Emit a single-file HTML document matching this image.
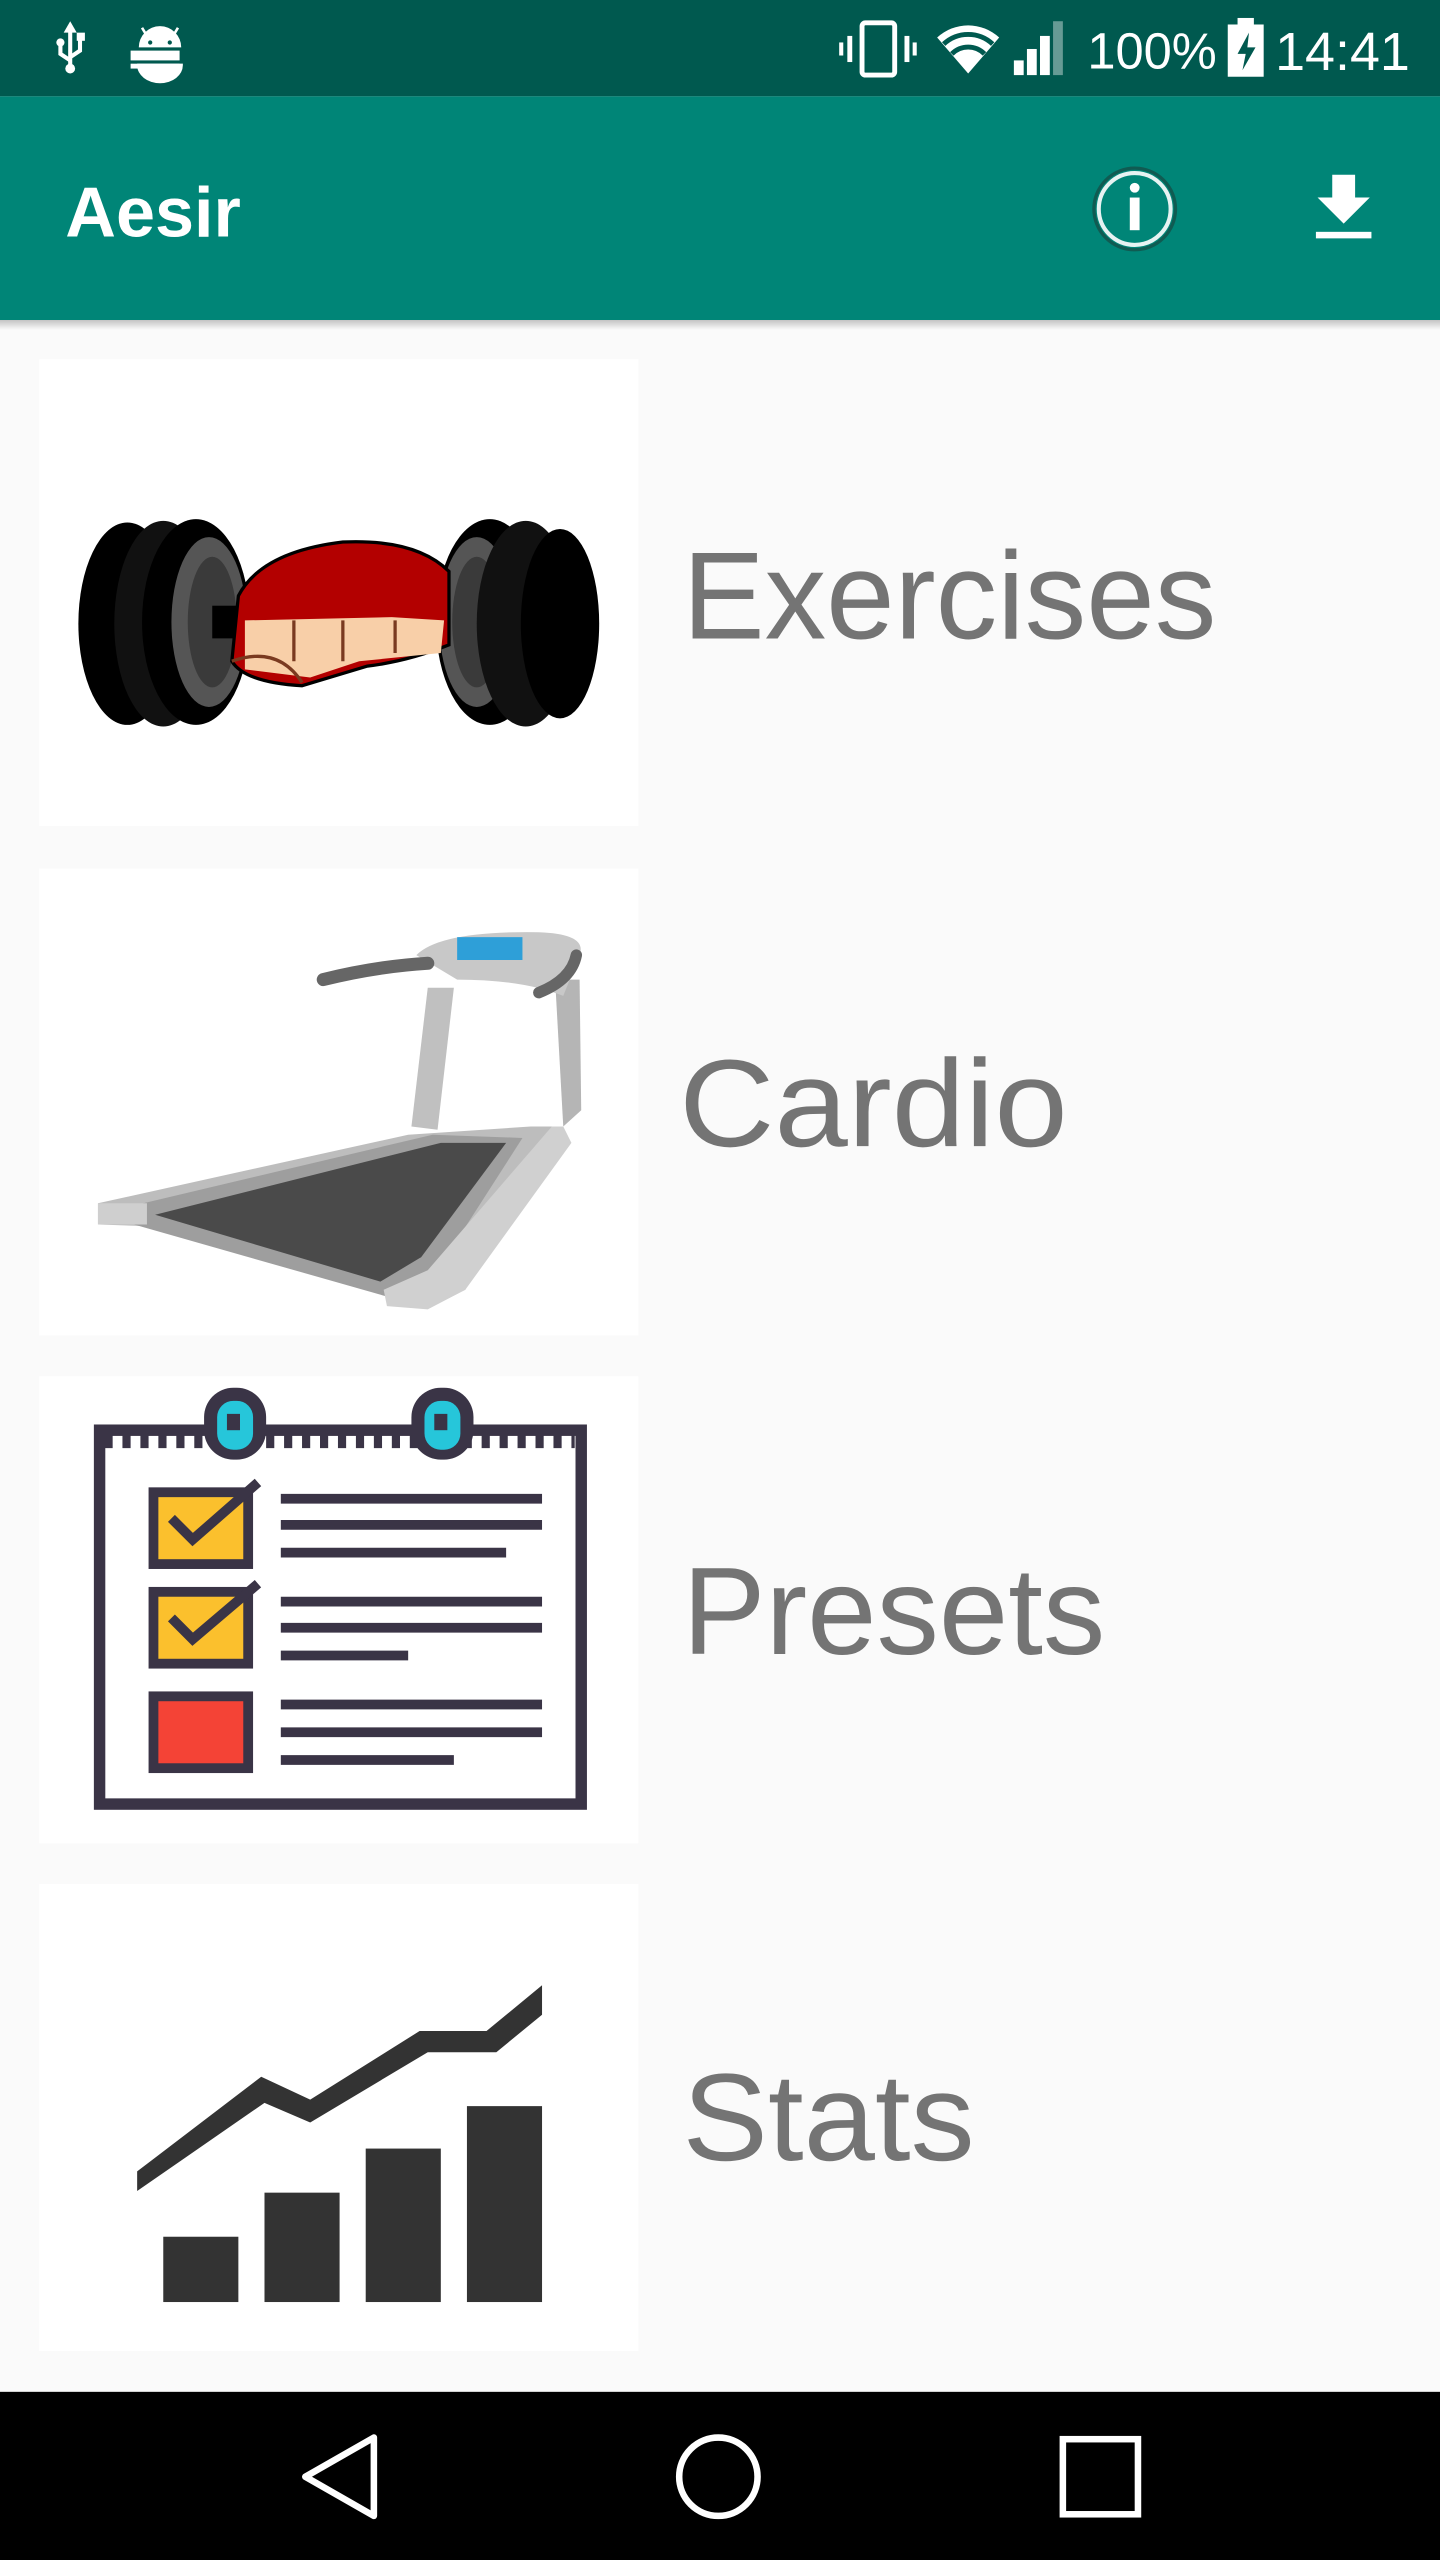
<!DOCTYPE html>
<html><head><meta charset="utf-8"><style>
html,body{margin:0;padding:0;width:1440px;height:2560px;overflow:hidden;background:#fafafa}
svg{display:block}
</style></head><body>
<svg width="1440" height="2560" viewBox="0 0 882 1568" preserveAspectRatio="none" xmlns="http://www.w3.org/2000/svg">
<defs>
<linearGradient id="sh" x1="0" y1="0" x2="0" y2="1"><stop offset="0" stop-color="#000" stop-opacity="0.22"/><stop offset="1" stop-color="#000" stop-opacity="0"/></linearGradient>
</defs>
<rect x="0" y="0" width="882" height="1568" fill="#fafafa"/>
<rect x="0" y="0" width="882" height="59" fill="#00594f"/>
<rect x="0" y="59" width="882" height="137" fill="#008577"/>
<rect x="0" y="196" width="882" height="6" fill="url(#sh)"/>
<!-- usb -->
<g fill="#fff" stroke="#fff">
<path d="M43 16 L43 42" stroke-width="2.5"/>
<path d="M39 20 L43 13 L47 20Z" stroke="none"/>
<path d="M37 26 L37 33 L43 37 M49 24 L49 31 L43 35" fill="none" stroke-width="2.5"/>
<circle cx="37" cy="26" r="2.5" stroke="none"/><rect x="47" y="20" width="5" height="5" stroke="none"/>
<circle cx="43" cy="42" r="3" stroke="none"/>
</g>
<!-- android -->
<g fill="#fff">
<path d="M85 29 A13 13 0 0 1 111 29Z"/>
<path d="M87 17 L90 22 M109 17 L106 22" stroke="#fff" stroke-width="1.6"/>
<rect x="80" y="31" width="30" height="6"/>
<path d="M84 39 H112 V40 A14 11 0 0 1 84 40Z"/>
<rect x="80" y="39" width="30" height="3"/>
</g>
<circle cx="92" cy="26" r="1.3" fill="#00594f"/><circle cx="104" cy="26" r="1.3" fill="#00594f"/>
<!-- vibrate -->
<rect x="528" y="14" width="20" height="32" rx="2" fill="none" stroke="#fff" stroke-width="3"/>
<rect x="519" y="22" width="3" height="16" fill="#fff"/><rect x="554" y="22" width="3" height="16" fill="#fff"/>
<rect x="514" y="26" width="2.5" height="8" fill="#fff"/><rect x="559" y="26" width="2.5" height="8" fill="#fff"/>
<!-- wifi -->
<path d="M574 23 A28 28 0 0 1 612 23 L593 45Z" fill="#fff"/>
<path d="M578 27 A22 22 0 0 1 608 27" fill="none" stroke="#00594f" stroke-width="3"/>
<path d="M583 33 A14 14 0 0 1 603 33" fill="none" stroke="#00594f" stroke-width="3"/>
<!-- signal bars -->
<rect x="621" y="37" width="6" height="9" fill="#fff"/>
<rect x="629" y="30" width="6" height="16" fill="#fff"/>
<rect x="637" y="22" width="6" height="24" fill="#fff"/>
<rect x="645" y="13" width="6" height="33" fill="#fff" opacity="0.4"/>
<text x="666" y="42" font-family="Liberation Sans, sans-serif" font-size="31" fill="#fff">100%</text>
<!-- battery -->
<rect x="752" y="15" width="22" height="32" fill="#fff"/><rect x="758" y="11" width="10" height="5" fill="#fff"/>
<path d="M765 20 L758 33 L763 33 L761 43 L769 29 L764 29Z" fill="#00594f"/>
<text x="781" y="43" font-family="Liberation Sans, sans-serif" font-size="33" fill="#fff">14:41</text>
<!-- title -->
<text x="40" y="145" font-family="Liberation Sans, sans-serif" font-weight="bold" font-size="43" fill="#fff">Aesir</text>
<!-- info -->
<circle cx="695" cy="128" r="25" fill="none" stroke="#1a3f3a" stroke-width="2" opacity="0.6"/>
<circle cx="695" cy="128" r="22" fill="none" stroke="#fff" stroke-width="2.5" opacity="0.9"/>
<circle cx="695" cy="115" r="3" fill="#fff"/><rect x="692" y="121" width="6" height="20" fill="#fff"/>
<!-- download -->
<path d="M816 107 H830 V121 H839 L823 137 L807 121 H816Z" fill="#fff"/>
<rect x="806" y="142" width="34" height="4" fill="#fff"/>

<rect x="24" y="220" width="367" height="286" fill="#fff"/>
<rect x="24" y="532" width="367" height="286" fill="#fff"/>
<rect x="24" y="843" width="367" height="286" fill="#fff"/>
<rect x="24" y="1154" width="367" height="286" fill="#fff"/>

<!-- dumbbell -->
<g>
<ellipse cx="78" cy="382" rx="30" ry="62" fill="#000"/>
<ellipse cx="100" cy="382" rx="30" ry="63" fill="#111"/>
<ellipse cx="120" cy="381" rx="33" ry="63" fill="#000"/>
<ellipse cx="128" cy="381" rx="23" ry="52" fill="#555"/>
<ellipse cx="130" cy="381" rx="15" ry="40" fill="#3a3a3a"/>
<rect x="130" y="371" width="160" height="20" fill="#000"/>
<ellipse cx="300" cy="381" rx="33" ry="63" fill="#000"/>
<ellipse cx="292" cy="381" rx="23" ry="52" fill="#555"/>
<ellipse cx="292" cy="381" rx="15" ry="40" fill="#3a3a3a"/>
<ellipse cx="322" cy="382" rx="30" ry="63" fill="#111"/>
<ellipse cx="343" cy="382" rx="24" ry="58" fill="#000"/>
<path d="M146 365 Q160 338 210 332 Q255 330 275 350 L275 395 Q250 405 225 408 L185 420 Q150 418 142 405Z" fill="#b30000" stroke="#000" stroke-width="2"/>
<path d="M150 380 L240 378 L272 380 L270 400 L220 405 L190 415 L150 410Z" fill="#f8cfa8"/>
<path d="M180 380 V405 M210 380 V405 M242 380 V400 M142 405 Q170 395 185 418" stroke="#7a3a20" stroke-width="2" fill="none"/>
</g>

<!-- treadmill -->
<g>
<path d="M60 737 L250 695 L325 690 L340 690 L285 790 L265 800 L240 790 L120 752 L60 750Z" fill="#bdbdbd"/>
<path d="M75 740 L265 695 L320 697 L270 775 L240 795 L75 748Z" fill="#9e9e9e"/>
<path d="M95 744 L270 700 L310 700 L258 770 L233 785Z" fill="#4a4a4a"/>
<path d="M235 790 L262 778 L338 690 L345 690 L350 700 L285 790 L262 802 L237 800Z" fill="#d0d0d0"/>
<path d="M60 737 L90 737 L90 750 L60 750Z" fill="#cfcfcf"/>
<path d="M252 690 L262 605 L278 605 L268 692Z" fill="#c0c0c0"/>
<path d="M340 600 L355 600 L356 680 L345 690Z" fill="#b5b5b5"/>
<path d="M255 585 Q270 570 330 571 Q360 572 355 585 L345 610 Q320 600 280 600Z" fill="#c8c8c8"/>
<rect x="280" y="574" width="40" height="14" fill="#2e9fd8"/>
<path d="M198 600 Q230 592 262 590" stroke="#666" stroke-width="8" fill="none" stroke-linecap="round"/>
<path d="M330 608 Q350 600 353 585" stroke="#666" stroke-width="7" fill="none" stroke-linecap="round"/>
</g>

<!-- presets -->
<g>
<rect x="61" y="876" width="295" height="229" fill="#fff" stroke="#3a3446" stroke-width="7"/>
<path d="M64 883 H352" stroke="#3a3446" stroke-width="8" stroke-dasharray="5 6"/>
<rect x="125" y="850" width="38" height="44" rx="18" fill="#3a3446"/>
<rect x="133" y="858" width="22" height="30" rx="10" fill="#26c6da"/>
<rect x="139" y="866" width="8" height="10" fill="#3a3446"/>
<rect x="252" y="850" width="38" height="44" rx="18" fill="#3a3446"/>
<rect x="260" y="858" width="22" height="30" rx="10" fill="#26c6da"/>
<rect x="266" y="866" width="8" height="10" fill="#3a3446"/>
<rect x="94" y="914" width="58" height="44" fill="#fbc02d" stroke="#3a3446" stroke-width="6"/>
<rect x="94" y="975" width="58" height="44" fill="#fbc02d" stroke="#3a3446" stroke-width="6"/>
<rect x="94" y="1039" width="58" height="44" fill="#f44336" stroke="#3a3446" stroke-width="6"/>
<path d="M105 930 L118 943 L158 908 M105 991 L118 1004 L158 970" stroke="#3a3446" stroke-width="6" fill="none"/>
<g stroke="#3a3446" stroke-width="6">
<path d="M172 918 H332 M172 934 H332 M172 951 H310"/>
<path d="M172 981 H332 M172 997 H332 M172 1014 H250"/>
<path d="M172 1044 H332 M172 1061 H332 M172 1078 H278"/>
</g>
</g>

<!-- stats -->
<g fill="#333">
<rect x="100" y="1370" width="46" height="40"/>
<rect x="162" y="1343" width="46" height="67"/>
<rect x="224" y="1316" width="46" height="94"/>
<rect x="286" y="1290" width="46" height="120"/>
<path d="M84 1330 L160 1272 L190 1286 L257 1244 L298 1244 L332 1216 L332 1234 L304 1257 L262 1257 L190 1300 L162 1288 L84 1342Z"/>
</g>

<g font-family="Liberation Sans, sans-serif" font-size="76" fill="#747474">
<text x="418" y="391" textLength="327" lengthAdjust="spacingAndGlyphs">Exercises</text>
<text x="416" y="702" textLength="238" lengthAdjust="spacingAndGlyphs">Cardio</text>
<text x="418" y="1013" textLength="259" lengthAdjust="spacingAndGlyphs">Presets</text>
<text x="418" y="1323" textLength="179" lengthAdjust="spacingAndGlyphs">Stats</text>
</g>

<rect x="0" y="1465" width="882" height="103" fill="#000"/>
<path d="M229 1493 L229 1541 L187 1517Z" fill="none" stroke="#fff" stroke-width="4" stroke-linejoin="round"/>
<circle cx="440" cy="1517" r="24" fill="none" stroke="#fff" stroke-width="4"/>
<rect x="651" y="1494" width="46" height="46" fill="none" stroke="#fff" stroke-width="4"/>
</svg>
</body></html>
